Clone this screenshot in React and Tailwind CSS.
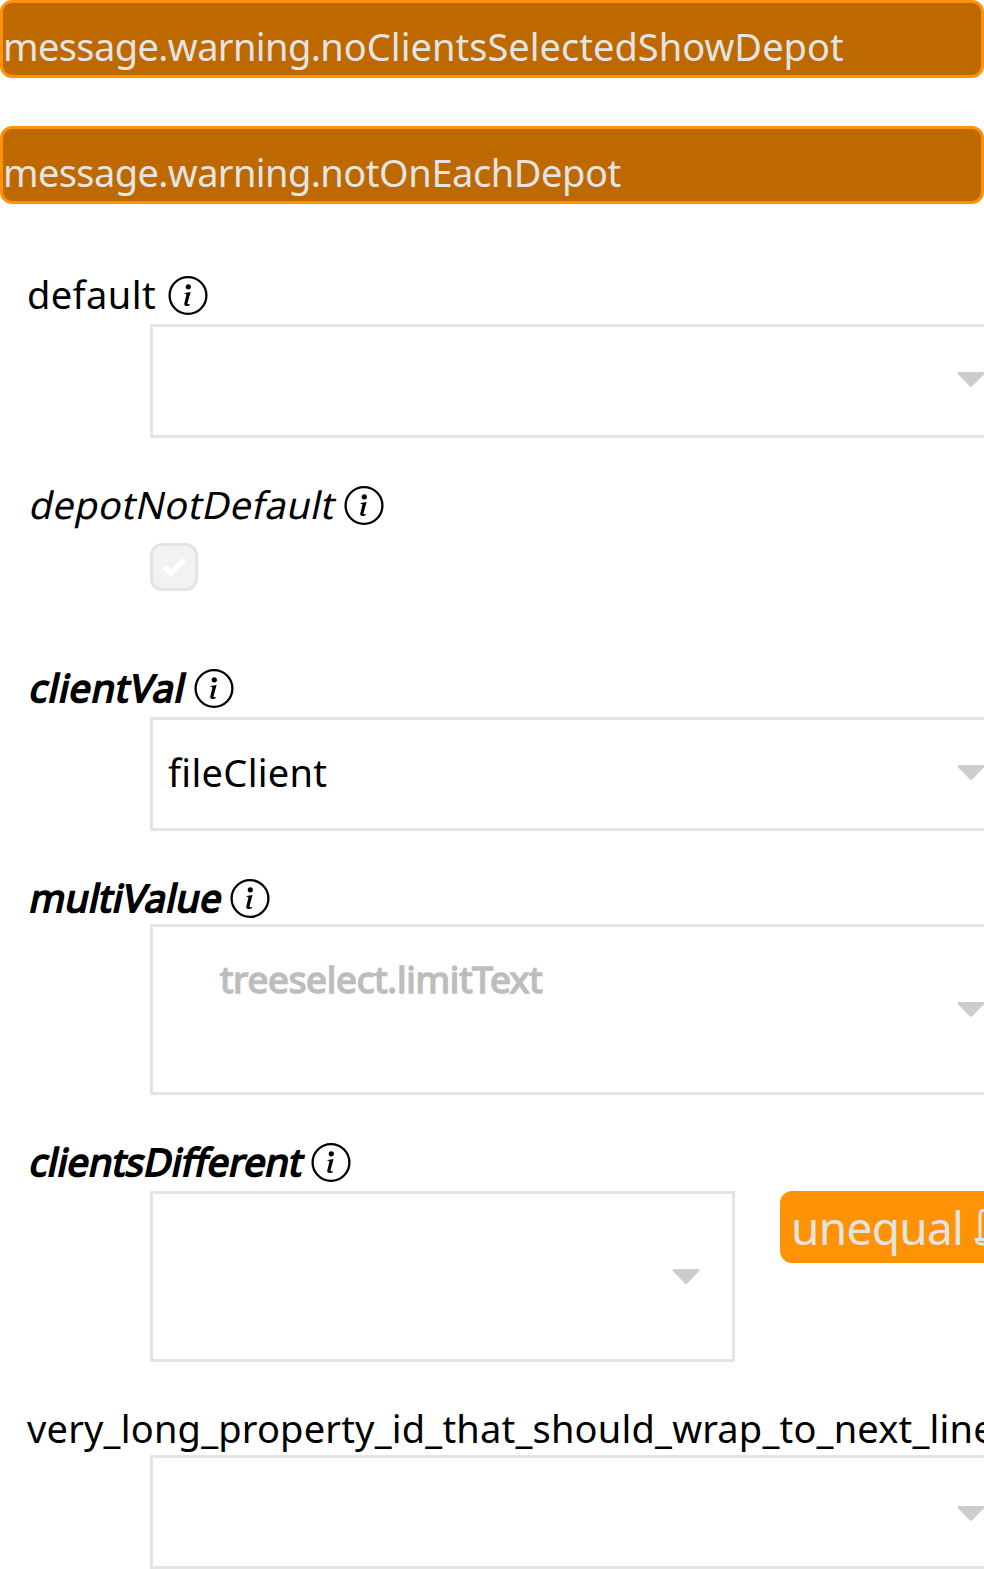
const Info = ({ className = "ml-3" }) => (
  <svg className={"h-10 w-10 shrink-0 translate-y-[0.5px] " + className} viewBox="0 0 40 40" fill="none">
    <circle cx="20" cy="20" r="18.4" stroke="#000" strokeWidth="2.3" />
    <circle cx="20.3" cy="11.3" r="2.6" fill="#000" />
    <path d="M16.6 17.4 22.6 16.5 19.5 27.8Q19.2 29.3 22 28.6L21.7 29.7Q16 32 16.2 28.2L18.4 19.2Q18.7 18.2 16.4 18.3Z" fill="#000" />
  </svg>
);

const Arrow = ({ className = "" }) => (
  <svg className={"h-4 w-7 shrink-0 " + className} viewBox="0 0 28 16">
    <path d="M1.7 0H26.3Q28.2 .8 27 2.2L15 14.5Q14 15.4 13 14.5L1 2.2Q-.2 .8 1.7 0Z" fill="#ccc" />
  </svg>
);

const Warning = ({ children, className }) => (
  <div className="h-[78px] rounded-xl border-[3px] border-[#ff9305] bg-[#bd6900] pt-3 text-[38px] leading-[62px] text-[#e4e4e2]">
    <span className="tracking-[-0.6px]">message.warning.</span>
    <span className={className}>{children}</span>
  </div>
);

const Label = ({ children, className = "" }) => (
  <div className="flex h-10 items-center whitespace-nowrap pl-[27px] text-[38px] leading-10">
    <span className={"-mt-0.5 inline-block " + className}>{children}</span>
    <Info />
  </div>
);

const SlantedLabel = ({ children, className = "" }) => (
  <div className="flex h-10 items-center whitespace-nowrap pl-[31px] text-[38px] leading-10">
    <span className={"-mt-0.5 inline-block -skew-x-12 " + className}>{children}</span>
    <Info className="ml-[7.5px]" />
  </div>
);

const Select = ({ children, className = "h-[114px]", arrow = "-mt-0.5" }) => (
  <div className={"ml-[150px] flex w-[870px] border-[3px] border-[#e4e4e3] " + className}>
    <div className="w-[803.5px] shrink-0">{children}</div>
    <Arrow className={"self-center " + arrow} />
  </div>
);

export default function App() {
  return (
    <div className="h-[1569px] w-full overflow-hidden bg-white font-['Noto_Sans',sans-serif] text-black">
      <Warning className="tracking-[0.02px]">noClientsSelectedShowDepot</Warning>
      <div className="h-12" />
      <Warning className="tracking-[-0.45px]">notOnEachDepot</Warning>

      <div className="pt-[71px]">
        <Label className="tracking-[0.4px]">default</Label>
        <div className="h-[9px]" />
        <Select />
      </div>

      <div className="pt-[47px]">
        <SlantedLabel className="tracking-[0.3px]">depotNotDefault</SlantedLabel>
        <div className="ml-[150px] mt-[18px] flex h-12 w-12 items-center justify-center rounded-xl border-[3px] border-[#e4e4e3] bg-[#f2f2f2]">
          <svg className="h-5 w-6" viewBox="0 0 24 20" fill="none" stroke="#fff" strokeWidth="5.4">
            <path d="M2 9.5 9 16 22 3" />
          </svg>
        </div>
      </div>

      <div className="pt-[77px]">
        <SlantedLabel className="tracking-[0.65px] [-webkit-text-stroke:1.8px_black]">clientVal</SlantedLabel>
        <div className="h-[9px]" />
        <Select>
          <div className="pl-[15px] pt-[26px] text-[38px] leading-[52px] tracking-[0.3px]">fileClient</div>
        </Select>
      </div>

      <div className="pt-[47px]">
        <SlantedLabel className="tracking-[0.15px] [-webkit-text-stroke:1.8px_black]">multiValue</SlantedLabel>
        <div className="h-[6px]" />
        <Select className="h-[171px]" arrow="">
          <div className="pl-[67px] pt-[26px] text-[37px] leading-[52px] tracking-[-0.25px] text-[#bdbdbd] [-webkit-text-stroke:1.6px_#bdbdbd]">treeselect.limitText</div>
        </Select>
      </div>

      <div className="pt-[47px]">
        <SlantedLabel className="tracking-[-0.03px] [-webkit-text-stroke:1.8px_black]">clientsDifferent</SlantedLabel>
        <div className="mt-[9px] flex pl-[150px]">
          <div className="flex h-[171px] w-[585px] shrink-0 items-center justify-end border-[3px] border-[#e4e4e3] pr-[32px]">
            <Arrow />
          </div>
          <div className="ml-[45px] flex h-[72px] w-[250px] shrink-0 items-center rounded-xl bg-[#ff9305] pl-[11px] text-[46px] leading-[72px] tracking-[-0.7px] text-[#e4e4e2]">
            <span className="w-[182px] shrink-0">unequal</span>
            <svg className="h-12 w-12 shrink-0" viewBox="0 0 48 48" fill="none" stroke="#e4e4e2" strokeWidth="3">
              <path d="M7 35V11Q7 7.5 10.5 7.5H37.5Q41 7.5 41 11V35" />
              <path d="M3 36.5H18Q19 39 24 39T30 36.5H45Q45 41 40 41H8Q4 41 3 36.5Z" />
            </svg>
          </div>
        </div>
      </div>

      <div className="pt-[47px]">
        <Label className="tracking-[0.2px]">very_long_property_id_that_should_wrap_to_next_line_on_small_devices</Label>
        <div className="h-[6px]" />
        <Select arrow="mt-1" />
      </div>
    </div>
  );
}
